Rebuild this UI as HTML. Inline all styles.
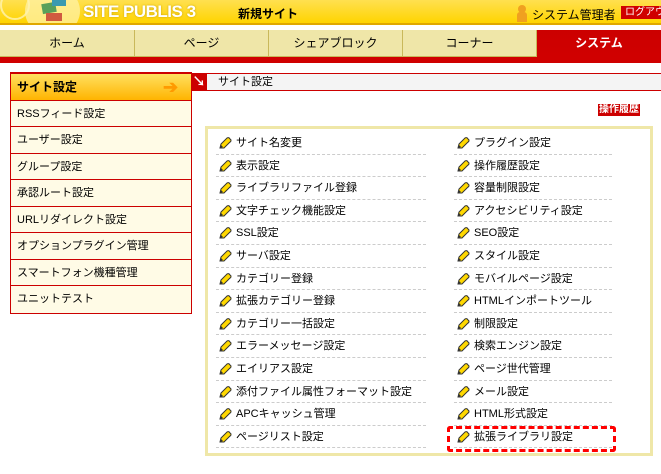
<!DOCTYPE html>
<html><head><meta charset="utf-8"><style>
*{margin:0;padding:0;box-sizing:border-box}
body{width:661px;height:474px;overflow:hidden;background:#fff;font-family:"Liberation Sans","Noto Sans CJK JP",sans-serif;font-size:11px;color:#000;position:relative}
.abs{position:absolute;white-space:nowrap}
#hdr{left:0;top:0;width:661px;height:25px;background:linear-gradient(#ffe050,#ffd400);border-bottom:2px solid #e0a800;overflow:hidden}
#tabs{left:0;top:30px;width:661px;height:27px}
.tab{position:absolute;top:0;height:27px;background:#efe6a8;border-right:1px solid #c9b85a;border-bottom:1px solid #c9b85a;text-align:center;line-height:27px;font-size:12px}
#rbar{left:0;top:57px;width:661px;height:6px;background:#d00000}
#side{left:10px;top:72px;width:182px;border:1px solid #c00;border-top:2px solid #c00}
.si{height:26.5px;border-bottom:1px solid #c00;background:#fffbe6;line-height:26px;padding-left:6px;font-size:11px;white-space:nowrap}
.si.first{background:linear-gradient(#ffe060,#ffb400);font-weight:bold;font-size:12px}
#crumb{left:191px;top:73px;width:470px;height:18px;background:#f4f4f4;border-top:1px solid #c00;border-bottom:1px solid #c00}
#box{left:205px;top:126px;width:448px;height:330px;border:3px solid #efe7a8}
.it{position:absolute;height:22.6px;line-height:22px;border-bottom:1px dashed #ccc;padding-left:20px;font-size:11px;white-space:nowrap}
.pen{position:absolute;left:2px;top:4px;width:14px;height:14px}
</style></head><body>
<div id="hdr" class="abs">
 <div class="abs" style="left:25px;top:-14px;width:55px;height:50px;border-radius:50%;background:#fff0a0;opacity:.8"></div>
 <div class="abs" style="left:0;top:-10px;width:30px;height:30px;border-radius:50%;border:2px solid #fff3b0;opacity:.8"></div>
 <div class="abs" style="left:42px;top:3px;width:14px;height:10px;background:#5aa05a;transform:rotate(-10deg)"></div>
 <div class="abs" style="left:52px;top:0px;width:14px;height:6px;background:#3a9ab0"></div>
 <div class="abs" style="left:46px;top:13px;width:16px;height:8px;background:#d05a40"></div>
 <div class="abs" style="left:83px;top:2px;color:#fff;font-weight:bold;font-size:17px;text-shadow:0 0 2px #c9a000;letter-spacing:-.5px">SITE PUBLIS 3</div>
 <div class="abs" style="left:238px;top:5px;font-weight:bold;font-size:12px">新規サイト</div>
 <div class="abs" style="left:518px;top:5px;width:8px;height:8px;border-radius:50%;background:#f0a020"></div>
 <div class="abs" style="left:517px;top:12px;width:10px;height:10px;background:#f0a020;border-radius:3px 3px 0 0"></div>
 <div class="abs" style="left:532px;top:6px;font-size:12px">システム管理者</div>
 <div class="abs" style="left:621px;top:6px;width:40px;height:13px;background:#d00000;color:#fff;font-size:10px;line-height:13px;padding-left:4px;overflow:hidden">ログアウト</div>
</div>
<div id="tabs" class="abs">
 <div class="tab" style="left:0;width:135px">ホーム</div>
 <div class="tab" style="left:135px;width:134px">ページ</div>
 <div class="tab" style="left:269px;width:134px">シェアブロック</div>
 <div class="tab" style="left:403px;width:134px">コーナー</div>
 <div class="tab" style="left:537px;width:124px;background:linear-gradient(#c00,#d00000);color:#fff;font-weight:bold;border:none">システム</div>
</div>
<div id="rbar" class="abs"></div>
<div id="side" class="abs">
 <div class="si first">サイト設定<span style="position:absolute;left:152px;top:4px;color:#ff9a00;font-size:18px;line-height:18px">➔</span></div>
 <div class="si">RSSフィード設定</div><div class="si">ユーザー設定</div><div class="si">グループ設定</div><div class="si">承認ルート設定</div><div class="si">URLリダイレクト設定</div><div class="si">オプションプラグイン管理</div><div class="si">スマートフォン機種管理</div><div class="si" style="border-bottom:none">ユニットテスト</div>
</div>
<div id="crumb" class="abs"><div class="abs" style="left:0;top:0;width:16px;height:16px;background:#c00;color:#fff;font-weight:bold;font-size:13px;line-height:16px;text-align:center">↘</div><div class="abs" style="left:27px;top:1px;line-height:15px">サイト設定</div></div>
<div class="abs" style="left:598px;top:104px;background:#c00;color:#fff;font-size:10px;line-height:12px;padding:0 1px;font-weight:bold">操作履歴</div>
<div id="box" class="abs"></div>
<svg width="0" height="0" style="position:absolute"><defs><g id="p"><path d="M2 12 L3 8 L9 2 Q11 1 12 3 L13 4 Q13 6 12 6 L6 12 Z" fill="#ffd800" stroke="#333" stroke-width="1"/><path d="M2 12 L3 9 L5 11 Z" fill="#333"/></g></defs></svg>
<div id="items"></div>
<div class="abs" style="left:447px;top:426px;width:169px;height:26px;border:3px dashed #f00;border-radius:3px"></div>
<script>
var a=["サイト名変更","表示設定","ライブラリファイル登録","文字チェック機能設定","SSL設定","サーバ設定","カテゴリー登録","拡張カテゴリー登録","カテゴリー一括設定","エラーメッセージ設定","エイリアス設定","添付ファイル属性フォーマット設定","APCキャッシュ管理","ページリスト設定"];
var b=["プラグイン設定","操作履歴設定","容量制限設定","アクセシビリティ設定","SEO設定","スタイル設定","モバイルページ設定","HTMLインポートツール","制限設定","検索エンジン設定","ページ世代管理","メール設定","HTML形式設定","拡張ライブラリ設定"];
var h="";
function mk(arr,x,w){arr.forEach(function(t,i){h+='<div class="it" style="left:'+x+'px;top:'+(132+i*22.6)+'px;width:'+w+'px"><svg class="pen" viewBox="0 0 14 14"><use href="#p"/></svg>'+t+'</div>';});}
mk(a,216,210);mk(b,454,158);
document.getElementById("items").innerHTML=h;
</script>
</body></html>
